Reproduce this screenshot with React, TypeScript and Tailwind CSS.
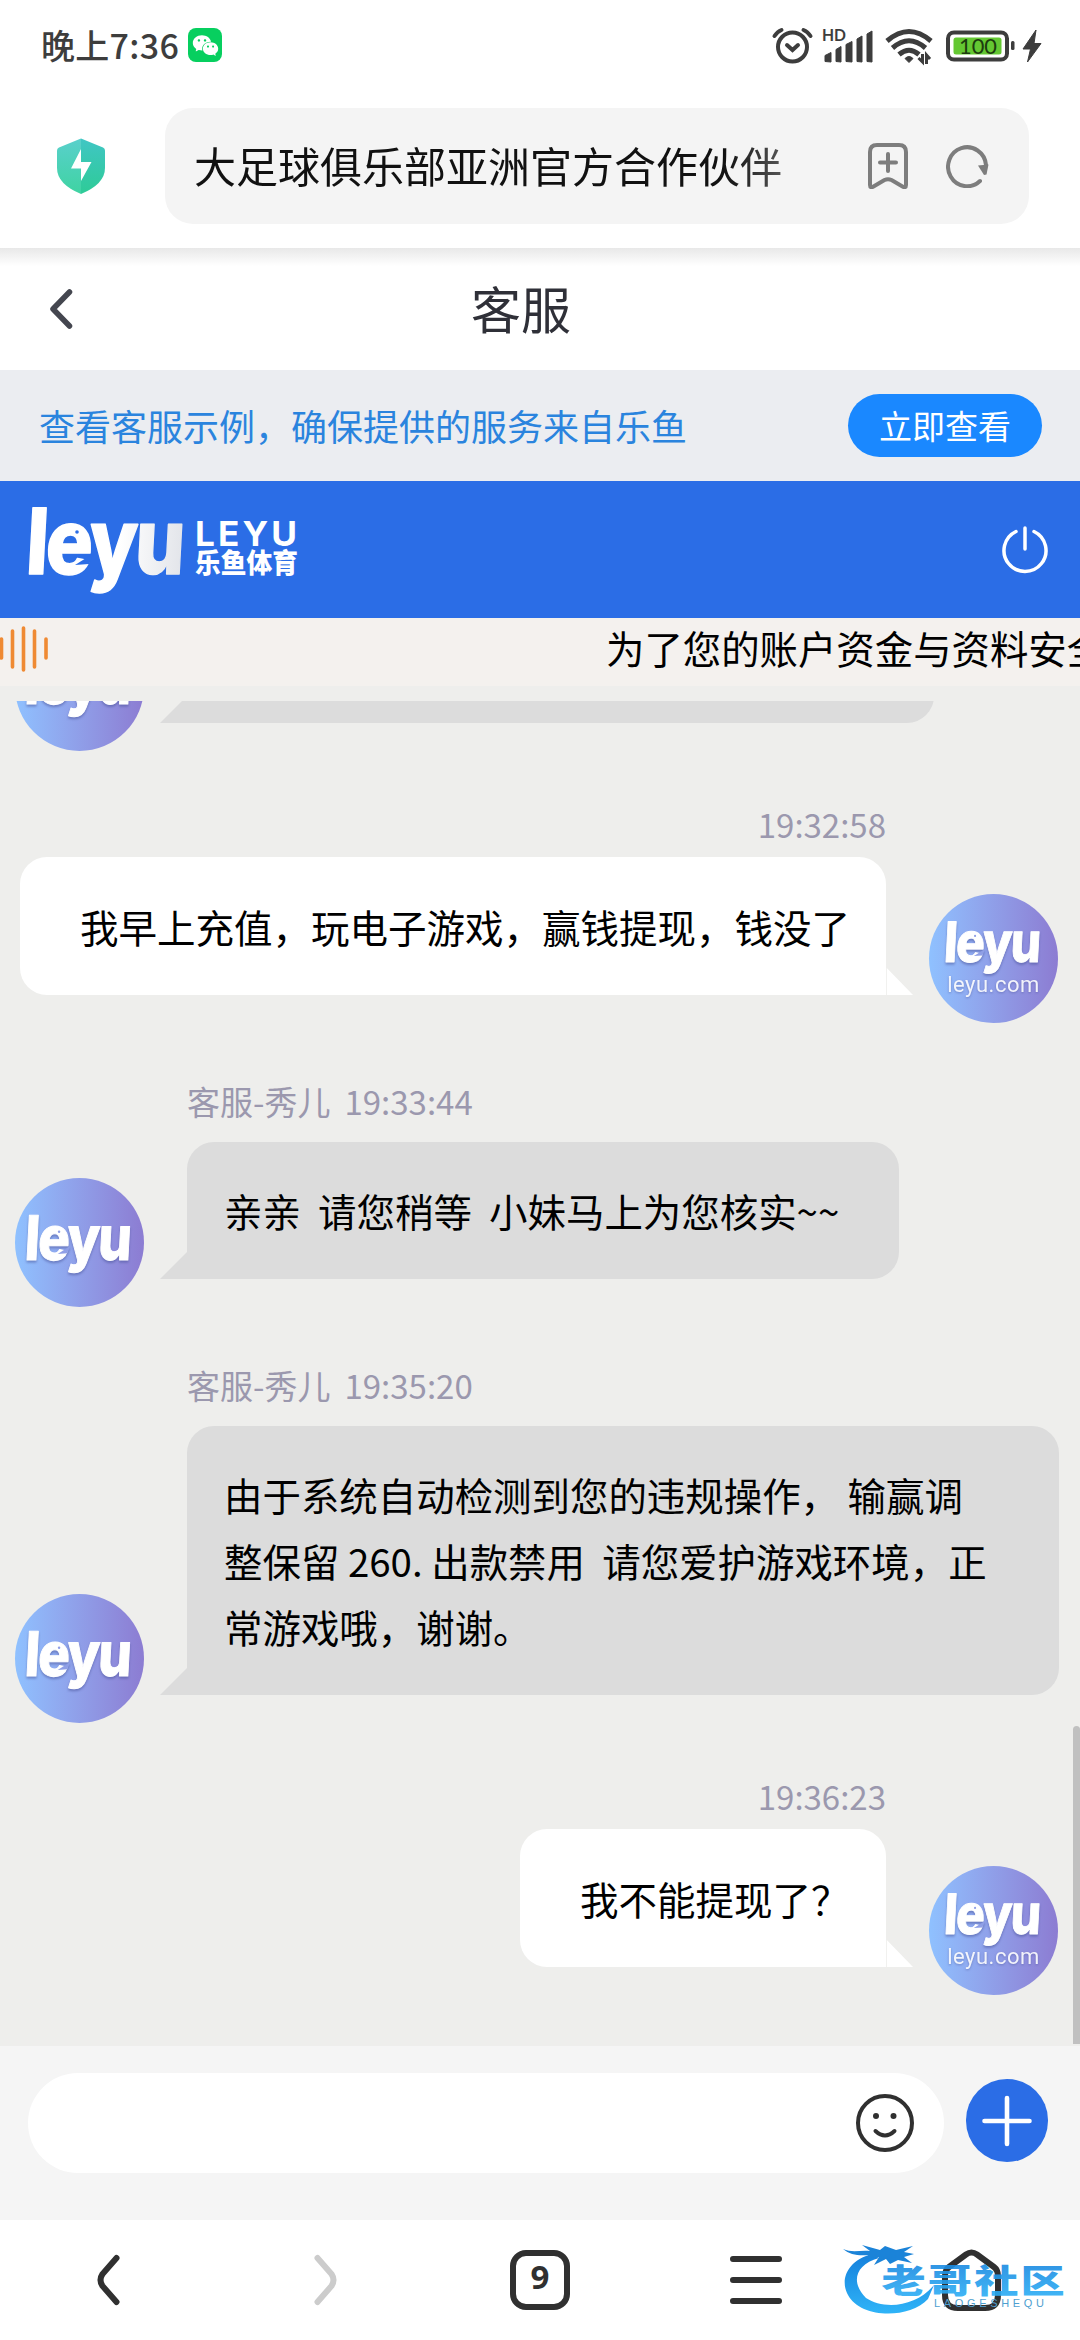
import type { ReactNode } from 'react';
import { AiFillWechat } from 'react-icons/ai';

interface Message {
  id: number;
  from: 'agent' | 'user';
  time: string;
  name?: string;
  text: string[];
  bubble: string;
}

const messages: Message[] = [
  {
    id: 1,
    from: 'user',
    time: '19:32:58',
    text: ['我早上充值，玩电子游戏，赢钱提现，钱没了'],
    bubble: 'w-[866px]',
  },
  {
    id: 2,
    from: 'agent',
    name: '客服-秀儿',
    time: '19:33:44',
    text: ['亲亲\u00a0\u00a0请您稍等\u00a0\u00a0小妹马上为您核实~~'],
    bubble: 'w-[712px]',
  },
  {
    id: 3,
    from: 'agent',
    name: '客服-秀儿',
    time: '19:35:20',
    text: [
      '由于系统自动检测到您的违规操作，\u00a0输赢调',
      '整保留 260. 出款禁用\u00a0\u00a0请您爱护游戏环境，正',
      '常游戏哦，谢谢。',
    ],
    bubble: 'w-[872px]',
  },
  {
    id: 4,
    from: 'user',
    time: '19:36:23',
    text: ['我不能提现了？'],
    bubble: 'w-[366px]',
  },
];

function Wordmark({ className, cut, shade }: { className: string; cut: string; shade?: boolean }) {
  const ink = shade ? 'url(#wordmark)' : '#fff';

  return (
    <svg viewBox="0 0 160 90" className={className} overflow="visible">
      <defs>
        <linearGradient id="wordmark" x1="0" x2="1" y1="0" y2="0">
          <stop offset="0.6" stopColor="#fff" />
          <stop offset="1" stopColor="#e3e5ea" />
        </linearGradient>
      </defs>
      <text
        x="-3"
        y="68"
        transform="translate(3.500 0) skewX(-3)"
        fontFamily="Inter, 'Open Sans', sans-serif"
        fontSize="91"
        fontWeight="800"
        letterSpacing="-3"
        textLength="156"
        lengthAdjust="spacingAndGlyphs"
        fill={ink}
        stroke={ink}
        strokeWidth="1.500"
        strokeLinejoin="round"
      >
        leyu
      </text>
      {/* fish fin and eye */}
      <path d="M47 59L66 47 61 58Z" fill={cut} />
      <circle cx="49" cy="26" r="1.800" fill={cut} />
    </svg>
  );
}

function Avatar({ withDomain }: { withDomain?: boolean }) {
  return (
    <div className="flex h-[129px] w-[129px] shrink-0 flex-col items-center rounded-full bg-linear-to-r from-[#8fc1ff] to-[#8c7cd2]">
      <Wordmark
        cut="#8f9fe6"
        className={
          withDomain
            ? 'mt-[26px] h-[55px] w-[98px] drop-shadow-[0_2px_1px_rgba(70,80,150,0.5)]'
            : 'mt-[36px] h-[61px] w-[108px] drop-shadow-[0_2px_1px_rgba(70,80,150,0.5)]'
        }
      />
      {withDomain && (
        <span className="-mt-[2px] font-[Roboto,sans-serif] text-[22px] leading-6 tracking-[0.5px] text-white/90 drop-shadow-[0_1px_1px_rgba(70,80,150,0.5)]">
          leyu.com
        </span>
      )}
    </div>
  );
}

function Tail({ side }: { side: 'left' | 'right' }) {
  return (
    <svg width="27" height="27" viewBox="0 0 27 27" className="shrink-0">
      {side === 'left' ? (
        <path d="M0 27L27 0V27Z" fill="#dcdcdc" />
      ) : (
        <path d="M0.8 0L27 27H0.8Z" fill="#fff" />
      )}
    </svg>
  );
}

function AgentMessage({ message }: { message: Message }) {
  return (
    <div>
      <div className="flex h-[147px] items-end pb-[21px] pl-[187px] text-[33px] leading-10 text-[#9b98ae]">
        <span>{message.name}</span>
        <span className="ml-[14px]">{message.time}</span>
      </div>
      <div className="flex items-end pl-[15px]">
        <div className="-mb-7">
          <Avatar />
        </div>
        <div className="w-4" />
        <Tail side="left" />
        <div
          className={`${message.bubble} rounded-[27px] rounded-bl-none bg-[#dcdcdc] pt-[35px] pb-[36px] pl-[37px] text-[38.45px] leading-[66px] whitespace-nowrap text-black`}
        >
          {message.text.map((line) => (
            <p key={line}>{line}</p>
          ))}
        </div>
      </div>
    </div>
  );
}

function UserMessage({ message }: { message: Message }) {
  return (
    <div>
      <div className="flex h-[134px] items-end justify-end pr-[194px] pb-[13px] text-[33px] leading-10 text-[#9b98ae]">
        {message.time}
      </div>
      <div className="flex items-end justify-end pr-[22px]">
        <div
          className={`${message.bubble} rounded-[27px] rounded-br-none bg-white pt-[36px] pb-[36px] pl-[60px] text-[38.5px] leading-[66px] whitespace-nowrap text-black`}
        >
          {message.text.map((line) => (
            <p key={line}>{line}</p>
          ))}
        </div>
        <Tail side="right" />
        <div className="w-4" />
        <div className="-mb-7">
          <Avatar withDomain />
        </div>
      </div>
    </div>
  );
}

function StatusBar() {
  return (
    <div className="flex h-[90px] items-center pr-[40px] pl-[41px]">
      <span className="text-[34px] leading-10 font-medium tracking-[0.3px] text-[#3d3d3d]">晚上7:36</span>
      <span className="ml-[9px] flex h-[34px] w-[34px] items-center justify-center rounded-lg bg-[#07cf5f] text-white">
        <AiFillWechat size={29} />
      </span>
      <svg width="268" height="40" viewBox="0 0 268 40" className="ml-auto" overflow="visible" fill="none" stroke="#3d3d3d">
        {/* alarm */}
        <g strokeWidth="4" strokeLinecap="round">
          <circle cx="20.500" cy="22" r="14.500" />
          <path d="M15 20l5.500 5 5.500-5" />
          <path d="M2.500 11q3-4.500 7-6M38.500 11q-3-4.500-7-6" />
        </g>
        {/* signal */}
        <text
          x="50"
          y="16"
          fontSize="17"
          fontWeight="700"
          fill="#3d3d3d"
          stroke="none"
          fontFamily="Lato, sans-serif"
          textLength="24"
          lengthAdjust="spacingAndGlyphs"
        >
          HD
        </text>
        <path
          d="M53 36.500v-6l6-3v9.500zM64 36.500v-12l5-3v15.500zM74 36.500v-17l6-3v20.500zM85 36.500V14l5-3v26zM95 36.500V9l5-3v31z"
          fill="#3d3d3d"
          strokeWidth="1"
          strokeLinejoin="round"
        />
        {/* wifi */}
        <g strokeWidth="5">
          <path d="M115 16q22-19 44 0" />
          <path d="M120.500 23q16.500-14.500 33 0" />
          <path d="M127 29.500q10-8.500 20 0" />
        </g>
        <path d="M133 33.500q4-4 8 0l-4 4z" fill="#3d3d3d" />
        <path d="M146.500 33l4 4v-8M158 34l-3.500-4v9" strokeWidth="3" />
        {/* battery */}
        <rect x="176" y="7.500" width="59" height="27" rx="6" strokeWidth="4" />
        <rect x="181.500" y="12.500" width="48" height="17" rx="2.500" fill="#64c832" stroke="none" />
        <text x="187" y="28.800" fontSize="22" fill="#1c3c0e" stroke="none" fontFamily="Lato, sans-serif" textLength="38" lengthAdjust="spacingAndGlyphs">
          100
        </text>
        <rect x="239" y="16" width="3.500" height="9" rx="1.500" fill="#3d3d3d" stroke="none" />
        <path d="M264 5L251 24h7.500l-3 13L269 18.500h-7z" fill="#3d3d3d" stroke="#3d3d3d" strokeWidth="1" />
      </svg>
    </div>
  );
}

function AddressBar() {
  return (
    <div className="flex h-[158px] items-start pt-[18px] pl-[57px]">
      <svg width="48" height="56" viewBox="0 0 48 56" className="mt-[30px] shrink-0">
        <defs>
          <linearGradient id="shield" x1="0" y1="0" x2="0" y2="1">
            <stop offset="0" stopColor="#59d0cc" />
            <stop offset="1" stopColor="#3fd3a2" />
          </linearGradient>
          <linearGradient id="shieldRight" x1="0" y1="0" x2="0" y2="1">
            <stop offset="0" stopColor="#40c6c4" />
            <stop offset="1" stopColor="#2ecb97" />
          </linearGradient>
        </defs>
        <path d="M24 0.500L2 9.500Q0 10.500 0 12.500V30Q0 46 24 56Z" fill="url(#shield)" />
        <path d="M24 0.500L46 9.500Q48 10.500 48 12.500V30Q48 46 24 56Z" fill="url(#shieldRight)" />
        <path d="M24 11L14 30.500h10V43L34.500 24H24Z" fill="#fff" />
      </svg>
      <div className="ml-[60px] flex h-[116px] w-[864px] items-center rounded-[28px] bg-[#f4f4f4] pr-10 pl-[29px]">
        <span className="bg-linear-to-r from-[#111] from-90% to-[#555] bg-clip-text pb-[3px] text-[42px] leading-[60px] whitespace-nowrap text-transparent">
          大足球俱乐部亚洲官方合作伙伴
        </span>
        <svg width="40" height="46" viewBox="0 0 40 46" className="ml-auto" fill="none" stroke="#7d7d7d" strokeWidth="4" strokeLinecap="round" strokeLinejoin="round">
          <path d="M9 2H31Q38 2 38 9V42Q38 45.500 34.500 43.500L23.500 37Q20 35.500 16.500 37L5.500 43.500Q2 45.500 2 42V9Q2 2 9 2Z" />
          <path d="M20 11V28M12 19.500H28" />
        </svg>
        <svg width="43" height="44" viewBox="0 0 43 44" className="ml-[38px]" fill="none">
          <path d="M34 37A19 19.500 0 1 1 40 21" stroke="#7d7d7d" strokeWidth="4" strokeLinecap="round" />
          <path d="M32 21.500L42.500 20.500 40.500 30.500 38 31Z" fill="#7d7d7d" />
        </svg>
      </div>
    </div>
  );
}

function PageTitle() {
  return (
    <div className="h-[122px] bg-white bg-linear-to-b from-[#e8e8e8] to-white to-[18px]">
      <div className="flex h-full items-center pl-[49px]">
        <svg width="24" height="40" viewBox="0 0 24 40" fill="none" stroke="#44464f" strokeWidth="5.500" strokeLinecap="round" strokeLinejoin="round">
          <path d="M20.500 3L4 20 20.500 37" />
        </svg>
        <h1 className="ml-[398px] pb-1 text-[50px] leading-[60px] text-[#2f3038]">客服</h1>
      </div>
    </div>
  );
}

function ServiceNotice() {
  return (
    <div className="flex h-[111px] items-center justify-between bg-[#ebedf1] pr-[38px] pl-[39px]">
      <span className="pb-[2px] text-[36px] text-[#2a84de]">查看客服示例，确保提供的服务来自乐鱼</span>
      <button className="h-[63px] w-[194px] rounded-full bg-[#1a88ff] pb-[1px] text-[33px] leading-[60px] text-white">
        立即查看
      </button>
    </div>
  );
}

function BrandBar() {
  return (
    <div className="flex h-[137px] items-start bg-[#2b6de6] pr-[31px] pl-7">
      <Wordmark cut="#2b6de6" shade className="mt-[25px] h-[90px] w-[160px]" />
      <svg width="104" height="64" viewBox="0 0 104 64" className="mt-[36px] ml-[6px]" overflow="visible" fill="#fff">
        <text x="1" y="29" fontSize="34" fontWeight="700" letterSpacing="3" textLength="105" lengthAdjust="spacingAndGlyphs" fontFamily="Inter, sans-serif">
          LEYU
        </text>
        <text x="1" y="56" fontSize="27" fontWeight="900" textLength="103" lengthAdjust="spacingAndGlyphs" fontFamily="'Noto Sans CJK SC', sans-serif">
          乐鱼体育
        </text>
      </svg>
      <svg width="48" height="50" viewBox="0 0 48 50" className="mt-[44px] ml-auto" fill="none" stroke="#fff" strokeWidth="3.500" strokeLinecap="round">
        <path d="M15 6.500A21 21 0 1 0 33 6.500" />
        <path d="M24 3V24" />
      </svg>
    </div>
  );
}

function Marquee() {
  return (
    <div className="flex h-[68px] items-start overflow-hidden bg-[#f4f1ee]">
      <svg width="50" height="66" viewBox="0 0 50 66" stroke="#ef8a33" strokeWidth="3.600" strokeLinecap="round" className="shrink-0">
        <path d="M1.500 21V40M12.500 13V49M23.500 10V52M34.500 13V49M46 21V40" />
      </svg>
      <span className="ml-[556px] text-[38.4px] leading-[58px] whitespace-nowrap text-black">
        为了您的账户资金与资料安全
      </span>
    </div>
  );
}

function Chat() {
  return (
    <div className="h-[1360px] bg-[#eeeeec] pt-[15px]">
      <div className="relative h-[1345px] overflow-hidden">
        {/* tail end of the message that is scrolled under the header */}
        <div className="flex h-[22px] items-end pl-[15px]">
          <div className="-mb-7">
            <Avatar />
          </div>
          <div className="w-4" />
          <Tail side="left" />
          <div className="h-[138px] w-[747px] rounded-[27px] rounded-bl-none bg-[#dcdcdc]" />
        </div>
        {messages.map((message) =>
          message.from === 'agent' ? (
            <AgentMessage key={message.id} message={message} />
          ) : (
            <UserMessage key={message.id} message={message} />
          ),
        )}
        <div className="absolute right-0 bottom-[2px] h-[318px] w-[7px] rounded-t-sm bg-[#c0c0c0]" />
      </div>
    </div>
  );
}

function Composer() {
  return (
    <div className="flex h-[174px] items-start bg-[#f5f5f5] pt-[27px] pl-7">
      <div className="flex h-[100px] w-[916px] items-center justify-end rounded-[50px] bg-white pr-[29px]">
        <svg width="60" height="60" viewBox="0 0 60 60" fill="none" stroke="#303030" strokeWidth="4">
          <circle cx="30" cy="30" r="27" />
          <circle cx="21" cy="23" r="3" fill="#303030" stroke="none" />
          <circle cx="38.500" cy="23" r="3" fill="#303030" stroke="none" />
          <path d="M20.500 38Q30 47 39.500 38" strokeLinecap="round" />
        </svg>
      </div>
      <div className="mt-[6px] ml-[22px] flex h-[83px] w-[82px] items-center justify-center rounded-full bg-[#2b6de6]">
        <svg width="52" height="52" viewBox="0 0 52 52" stroke="#fff" strokeWidth="4.600" strokeLinecap="round">
          <path d="M26 3V49M3.500 26H48.500" />
        </svg>
      </div>
    </div>
  );
}

function NavItem({ children }: { children: ReactNode }) {
  return <div className="flex h-full flex-1 items-center justify-center">{children}</div>;
}

function BrowserNav() {
  return (
    <div className="relative flex h-[120px] bg-white">
      <NavItem>
        <svg width="24" height="52" viewBox="0 0 24 52" fill="none" stroke="#303030" strokeWidth="6" strokeLinecap="round">
          <path d="M20.500 4L6.500 20Q2.500 26 6.500 32L20.500 48" />
        </svg>
      </NavItem>
      <NavItem>
        <svg width="24" height="52" viewBox="0 0 24 52" fill="none" stroke="#cccccc" strokeWidth="6" strokeLinecap="round" className="ml-1">
          <path d="M3.500 4L17.500 20Q21.500 26 17.500 32L3.500 48" />
        </svg>
      </NavItem>
      <NavItem>
        <div className="h-[60px] w-[60px] rounded-[16px] border-[6px] border-[#303030] text-center font-['Open_Sans',sans-serif] text-[33px] leading-[42px] font-bold text-[#303030]">
          9
        </div>
      </NavItem>
      <NavItem>
        <svg width="54" height="54" viewBox="0 0 54 54" stroke="#303030" strokeWidth="6" strokeLinecap="round">
          <path d="M4 6H50M4 27H50M4 48H50" />
        </svg>
      </NavItem>
      <NavItem>
        <svg width="62" height="64" viewBox="0 0 62 64" fill="none" stroke="#303030" strokeWidth="6" strokeLinejoin="round">
          <path d="M4 28Q4 22 8 19L25 6.500Q30.500 2.500 36 6.500L53 19Q57 22 57 28V47Q57 60 44 60H17Q4 60 4 47Z" />
        </svg>
      </NavItem>

      {/* community watermark */}
      <svg width="226" height="76" viewBox="0 0 226 76" className="absolute top-[21px] right-[12px]" overflow="visible">
        <defs>
          <linearGradient id="community" x1="0" y1="0" x2="0" y2="1">
            <stop offset="0" stopColor="#1580dc" />
            <stop offset="1" stopColor="#2fb4f8" />
          </linearGradient>
        </defs>
        <path
          d="M30 13C4 20-2 40 6 54C18 77 66 79 86 58L92 44C74 66 42 69 24 57C9 42 12 24 37 17Z"
          fill="url(#community)"
        />
        <path
          d="M1 8C10 12 18 9 28 10L20 4 38 9 43 5 54 9 71 5 62 11 72 13 62 16 70 22 56 19 48 23 44 18 32 24 37 16 23 18 27 14C17 15 8 14 1 8Z"
          fill="#1b83d8"
        />
        <text
          x="43"
          y="77"
          fontSize="48"
          fontWeight="900"
          fontFamily="'Noto Sans CJK SC', sans-serif"
          fill="url(#community)"
          fillOpacity="0.9"
          textLength="199"
          transform="scale(0.92 0.68)"
        >
          老哥社区
        </text>
        <text x="92" y="65.500" fontSize="11" textLength="110" fontFamily="'Liberation Sans', sans-serif" fill="#4f9fd0">
          LAOGESHEQU
        </text>
      </svg>
    </div>
  );
}

export default function App() {
  return (
    <div className="flex h-[2340px] w-[1080px] flex-col overflow-hidden bg-white font-['Noto_Sans_CJK_SC',sans-serif]">
      <StatusBar />
      <AddressBar />
      <PageTitle />
      <ServiceNotice />
      <BrandBar />
      <Marquee />
      <Chat />
      <Composer />
      <BrowserNav />
    </div>
  );
}
